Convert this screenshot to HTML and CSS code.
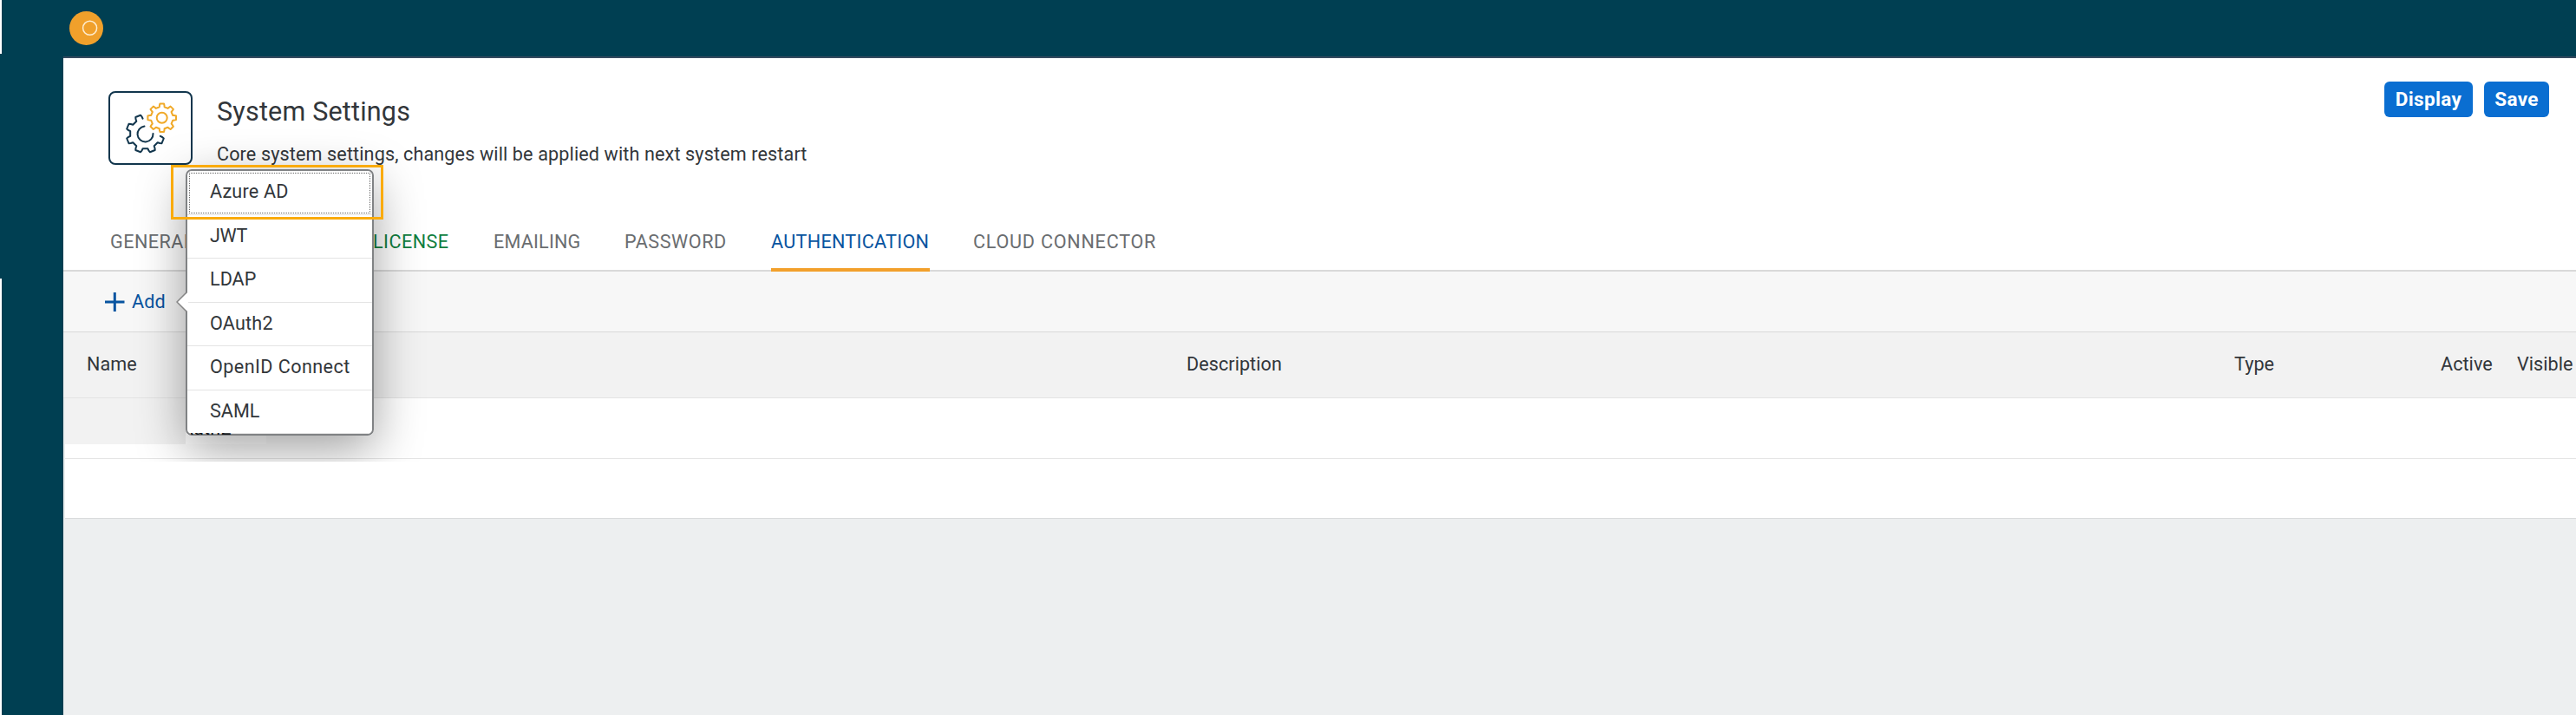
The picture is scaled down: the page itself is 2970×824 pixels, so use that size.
FILE: index.html
```html
<!DOCTYPE html>
<html lang="en">
<head>
<meta charset="utf-8">
<title>System Settings</title>
<link rel="stylesheet" href="styles.css">
</head>
<body>
<div class="app">
  <header class="shellbar">
    <svg class="logo" width="40" height="40" viewBox="0 0 40 40"><circle cx="20.5" cy="19.5" r="19.5" fill="#f0a02b"/><circle cx="24.6" cy="19.3" r="8" fill="none" stroke="#fdeccf" stroke-width="1.5"/></svg>
  </header>
  <div class="body">
    <aside class="sidebar"></aside>
    <main class="main">
      <section class="page-head">
        <div class="app-icon">
          <svg width="97" height="85" viewBox="0 0 97 85" fill="none" stroke-width="2" stroke-linejoin="round" stroke-linecap="round">
            <g id="gears"></g>
          </svg>
        </div>
        <div class="titles">
          <h1 class="title">System Settings</h1>
          <p class="subtitle">Core system settings, changes will be applied with next system restart</p>
        </div>
        <div class="actions"><button class="btn display">Display</button><button class="btn save">Save</button></div>
      </section>
      <nav class="tabs">
        <a class="tab general">GENERAL</a>
        <a class="tab license">LICENSE</a>
        <a class="tab emailing">EMAILING</a>
        <a class="tab password">PASSWORD</a>
        <a class="tab auth active">AUTHENTICATION</a>
        <a class="tab cloud">CLOUD CONNECTOR</a>
      </nav>
      <div class="toolbar">
        <svg width="23" height="22" viewBox="0 0 23 22"><path d="M0 11H22.500M11.300 0V22" stroke="#0854a0" stroke-width="3"/></svg>
        <span class="add">Add</span>
      </div>
      <div class="table">
        <div class="row head"><span class="c-name">Name</span><span class="c-desc">Description</span><span class="c-type">Type</span><span class="c-active">Active</span><span class="c-visible">Visible</span></div>
        <div class="row first"><div class="cell-shade"></div></div>
        <div class="row second"></div>
      </div>
    </main>
  </div>
  <div class="shadow-clip"><div class="shadow"></div></div>
  <div class="patch"></div>
  <div class="menu">
    <div class="item focus"><span class="azure">Azure AD</span></div>
    <div class="item"><span class="jwt">JWT</span></div>
    <div class="item"><span class="ldap">LDAP</span></div>
    <div class="item"><span class="oauth">OAuth2</span></div>
    <div class="item"><span class="openid">OpenID Connect</span></div>
    <div class="item"><span class="saml">SAML</span></div>
  </div>
  <div class="row-name"><span>OAuth2</span></div>
  <svg class="arrow" width="14" height="26" viewBox="0 0 14 26"><path d="M14 1 1.500 13 14 25Z" fill="#fff"/><path d="M12.500 1.500 1 13 12.500 24.500" fill="none" stroke="#858585" stroke-width="1.500"/></svg>
  <div class="highlight"></div>
</div>
<script src="gears.js"></script>
</body>
</html>
```

FILE: gears.js
```js
// Builds a cog outline out of alternating root and tooth points.
function cog(cx, cy, root, tip, offset, from, to) {
  const step = 45, pts = [];
  const at = (r, deg) => {
    const a = deg * Math.PI / 180;
    return (cx + r * Math.cos(a)).toFixed(1) + ' ' + (cy + r * Math.sin(a)).toFixed(1);
  };
  for (let i = from; i < to; i++) {
    const c = offset + i * step;
    pts.push(at(root, c - 13), at(tip - 2, c - 11), at(tip, c - 8), at(tip, c + 8), at(tip - 2, c + 11), at(root, c + 13));
  }
  return 'M' + pts.join('L');
}
document.getElementById('gears').innerHTML =
  '<path stroke="#f0a928" d="' + cog(61.700, 30.800, 12.800, 16.500, 0, 0, 8) + 'Z"/>' +
  '<circle cx="61.700" cy="30.800" r="6" stroke="#f0a928"/>' +
  '<path stroke="#12364d" d="' + cog(42.500, 49, 17.500, 22, 22.500, 0, 6) + '"/>' +
  '<path stroke="#12364d" d="M41.500 40.500A9 9 0 1 0 51.500 49"/>';
```

FILE: styles.css
```css
* { box-sizing: border-box; }
body { margin: 0; background: #fff; font-family: Roboto, "Noto Sans", sans-serif; font-size: 21.600px; line-height: 26px; color: #32363a; }
.app { position: relative; width: 2970px; height: 824px; overflow: hidden; display: flex; flex-direction: column; background: linear-gradient(#003f52, #003f52) 0 62px / 2px 259px no-repeat; }
.shellbar { flex: none; height: 67px; margin-left: 2px; padding: 13px 0 0 77px; background: #003f52; }
.logo { display: block; }
.body { flex: 1; display: flex; min-height: 0; padding-left: 2px; }
.sidebar { flex: none; width: 71px; background: #003f52; }
.main { flex: 1; display: flex; flex-direction: column; background: #edeff0; box-shadow: 0 -2px #354a5f; }
.page-head { flex: none; height: 183px; padding: 38px 31px 0 52px; display: flex; background: #fff; }
.app-icon { flex: none; width: 97px; height: 85px; border: 2px solid #12364d; border-radius: 8px; }
.app-icon svg { display: block; margin: -2px; }
.titles { flex: 1; padding-left: 28px; }
.title { margin: 5px 0 0; font-size: 30.500px; line-height: 38px; font-weight: 400; letter-spacing: .2px; }
.subtitle { margin: 17px 0 0; line-height: 26px; letter-spacing: .12px; }
.actions { display: flex; gap: 13px; margin-top: -11px; }
.btn { height: 41px; padding: 0 0 2px; border: 0; border-radius: 6px; background: #0a6ed1; color: #fff; font: bold 22.500px/26px Roboto, sans-serif; letter-spacing: .35px; }
.display { width: 102px; }
.save { width: 75px; }
.tabs { flex: none; height: 63px; padding-left: 54px; display: flex; background: #fff; border-bottom: 2px solid #d9d9d9; color: #6a6d70; }
.tab { height: 63px; padding-top: 16px; margin-right: 51px; white-space: nowrap; letter-spacing: .45px; }
.general { width: 252px; }
.license { width: 88px; color: #107e3e; }
.emailing { width: 100px; letter-spacing: .2px; }
.password { width: 118px; letter-spacing: .55px; }
.auth { width: 183px; letter-spacing: .3px; }
.cloud { letter-spacing: .75px; margin-left: -1px; }
.active { color: #0854a0; background: linear-gradient(#f2a02b, #f2a02b) 0 59px / 100% 4px no-repeat; }
.toolbar { flex: none; height: 70px; padding: 0 0 0 48px; display: flex; align-items: center; gap: 8px; background: #f7f7f7; border-bottom: 1px solid #d9d9d9; color: #0854a0; }
.add { letter-spacing: .1px; }
.table { margin-left: 2px; background: #fff; }
.row { height: 70px; border-bottom: 1px solid #e4e4e4; }
.head { height: 76px; margin-left: -2px; padding: 24px 0 0 27px; display: flex; background: #f2f2f2; letter-spacing: .05px; }
.c-name { width: 1268px; }
.c-desc { width: 1208px; }
.c-type { width: 238px; }
.c-active { width: 88px; }
.cell-shade { width: 139px; height: 53px; background: #f2f2f2; }
.second { height: 69px; border-color: #d9dbdc; }
.shadow-clip { position: absolute; left: 73px; top: 67px; width: 600px; height: 465px; overflow: hidden; }
.shadow { position: absolute; left: 141px; top: 128px; width: 217px; height: 307px; border-radius: 6px; box-shadow: 0 15px 55px rgba(0,0,0,.38); }
.patch { position: absolute; left: 214px; top: 495px; width: 93px; height: 17px; background: rgba(255,255,255,.08); }
.menu { position: absolute; left: 214px; top: 195px; width: 217px; height: 307px; border: 2px solid #808284; border-radius: 7px; background: #fff; overflow: hidden; }
.item { height: 50.500px; padding: 11px 0 0 26px; border-bottom: 1px solid #e4e4e4; white-space: nowrap; }
.azure { letter-spacing: .2px; }
.jwt { letter-spacing: -.4px; }
.oauth { letter-spacing: .2px; }
.openid { letter-spacing: .42px; }
.focus { outline: 1px dotted #666; outline-offset: -3px; }
.row-name { position: absolute; left: 214px; top: 499px; width: 54px; height: 3px; overflow: hidden; color: #15181b; letter-spacing: .2px; }
.row-name span { display: block; margin: -18px 0 0 -20px; }
.arrow { position: absolute; left: 203px; top: 335px; }
.highlight { position: absolute; left: 197px; top: 190px; width: 245px; height: 63px; border: 3px solid #faab0c; }
```
